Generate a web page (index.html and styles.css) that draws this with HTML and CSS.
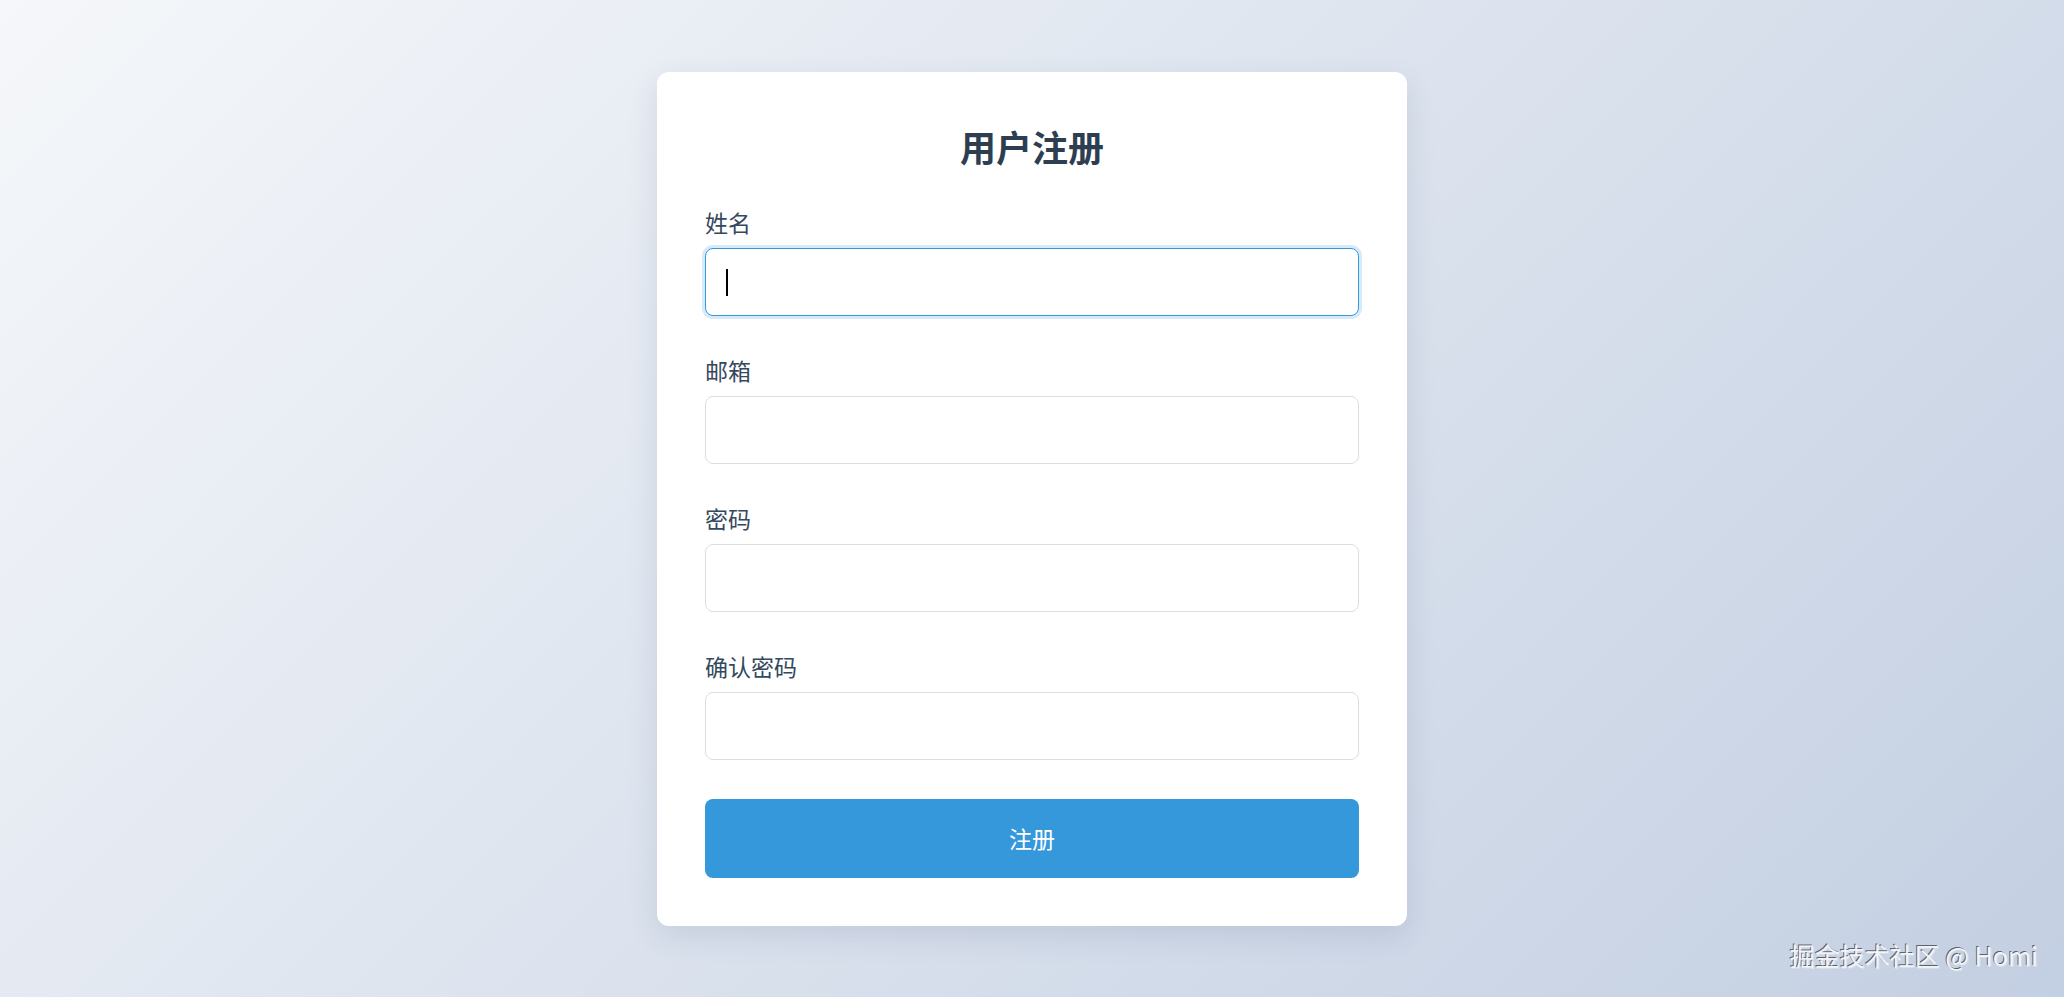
FILE: index.html
```html
<!DOCTYPE html>
<html lang="zh-CN">
<head>
<meta charset="utf-8">
<title>用户注册</title>
<link rel="stylesheet" href="styles.css">
</head>
<body>
<main class="page">
  <form class="card" onsubmit="return false;">
    <h1 class="title">用户注册</h1>
    <div class="field">
      <label class="label" for="name">姓名</label>
      <div class="input-wrap">
        <input class="input is-focused" id="name" type="text">
        <span class="caret"></span>
      </div>
    </div>
    <div class="field">
      <label class="label" for="email">邮箱</label>
      <input class="input" id="email" type="email">
    </div>
    <div class="field">
      <label class="label" for="pwd">密码</label>
      <input class="input" id="pwd" type="password">
    </div>
    <div class="field">
      <label class="label" for="pwd2">确认密码</label>
      <input class="input" id="pwd2" type="password">
    </div>
    <button class="submit" type="submit">注册</button>
  </form>
  <div class="watermark">掘金技术社区 @ Homi</div>
</main>
</body>
</html>
```

FILE: styles.css
```css
* {
  box-sizing: border-box;
}

html, body {
  margin: 0;
  padding: 0;
  height: 100%;
}

body {
  font-family: "Noto Sans CJK SC", "Noto Sans", "Liberation Sans", sans-serif;
  background: linear-gradient(135deg, #f5f7fa 0%, #c3cfe2 100%);
  min-height: 100vh;
}

.page {
  position: relative;
  min-height: 100vh;
  display: flex;
  align-items: center;
  justify-content: center;
}

.card {
  width: 750px;
  background: #ffffff;
  border-radius: 12px;
  padding: 48px;
  box-shadow: 0 10px 30px rgba(40, 60, 100, 0.12);
  display: flex;
  flex-direction: column;
}

.title {
  margin: 0 0 34px;
  font-size: 36px;
  line-height: 52px;
  font-weight: 700;
  color: #2c3e50;
  text-align: center;
}

.field {
  display: flex;
  flex-direction: column;
  margin-bottom: 38px;
}

.label {
  font-size: 23px;
  line-height: 32px;
  color: #34495e;
  margin-bottom: 10px;
}

.input-wrap {
  position: relative;
}

.input {
  width: 100%;
  height: 68px;
  padding: 0 20px;
  font-size: 20px;
  font-family: inherit;
  border: 1px solid #dddddd;
  border-radius: 8px;
  background: #ffffff;
  outline: none;
  display: block;
}

.input.is-focused {
  border-color: #3498db;
  box-shadow: 0 0 0 3px rgba(52, 152, 219, 0.2);
}

.caret {
  position: absolute;
  left: 21px;
  top: 21px;
  width: 2px;
  height: 27px;
  background: #000000;
}

.submit {
  margin-top: 1px;
  height: 79px;
  width: 100%;
  border: none;
  border-radius: 8px;
  background: #3498db;
  color: #ffffff;
  font-family: inherit;
  font-size: 23px;
  cursor: pointer;
}

.watermark {
  position: absolute;
  right: 26px;
  bottom: 27px;
  font-size: 25px;
  line-height: 30px;
  color: #f2f4f8;
  text-shadow: -1px -1px 0 rgba(0, 0, 0, 0.55), 1px 1px 0 rgba(255, 255, 255, 0.3);
  font-family: "Noto Sans CJK SC", "Liberation Sans", sans-serif;
}
```
